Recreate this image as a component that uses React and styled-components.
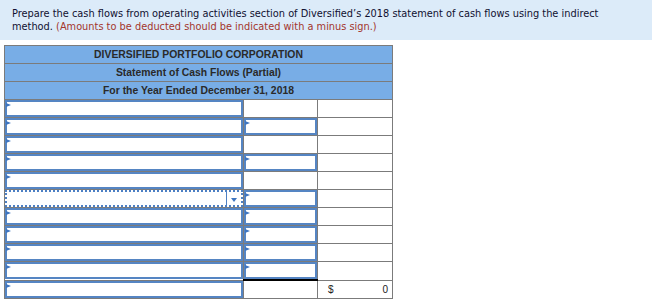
import React from "react";
import styled, { createGlobalStyle } from "styled-components";

const GlobalStyle = createGlobalStyle`
  body {
    margin: 0;
    background: #ffffff;
  }
`;

const Prompt = styled.div`
  background: #dcebf9;
  height: 40px;
  box-sizing: border-box;
  padding: 7px 12px 0 12px;
  font-family: "DejaVu Sans", Verdana, sans-serif;
  font-size: 9.8px;
  line-height: 13px;
  color: #101030;
`;

const Note = styled.span`
  color: #a3352c;
`;

const Sheet = styled.table`
  margin: 5px 0 0 4px;
  width: 388px;
  border-collapse: collapse;
  table-layout: fixed;
  font-family: "Liberation Sans", Arial, sans-serif;
`;

const HeadCell = styled.th`
  background: #78ade6;
  border: 1px solid #7b7b7b;
  height: 17px;
  padding: 0;
  font-size: 10.4px;
  font-weight: bold;
  color: #2a2a2a;
  text-align: center;
`;

const Cell = styled.td`
  border: 1px solid #7b7b7b;
  border-top: ${(p) => (p.$total ? "2px solid #000" : "1px solid #7b7b7b")};
  height: 17px;
  padding: 0;
  vertical-align: top;
  font-size: 10px;
`;

const Field = styled.div`
  position: relative;
  height: 17px;
  box-sizing: border-box;
  border: 2px solid #5585c3;
  background: #fff;
`;

const Flag = styled.span`
  position: absolute;
  left: -1px;
  top: 1px;
  width: 0;
  height: 0;
  border-top: 2.5px solid transparent;
  border-bottom: 2.5px solid transparent;
  border-left: 5px solid #3e75c0;
`;

const Picker = styled.div`
  height: 17px;
  box-sizing: border-box;
  border: 2px dotted #4d80c4;
  display: flex;
  justify-content: flex-end;
`;

const PickerArrow = styled.div`
  width: 14px;
  border-left: 1px solid #4d80c4;
  display: flex;
  align-items: center;
  justify-content: center;
  &::after {
    content: "";
    margin-top: 3px;
    border-left: 3.5px solid transparent;
    border-right: 3.5px solid transparent;
    border-top: 4px solid #3e75c0;
  }
`;

const Amount = styled.div`
  display: flex;
  justify-content: space-between;
  align-items: center;
  height: 17px;
  padding: 0 4px 0 10px;
  color: #222;
`;

const Input = () => (
  <Field>
    <Flag />
  </Field>
);

const rows = [
  { a: "input", b: false },
  { a: "input", b: true },
  { a: "input", b: false },
  { a: "input", b: true },
  { a: "input", b: false },
  { a: "select", b: true },
  { a: "input", b: true },
  { a: "input", b: true },
  { a: "input", b: true },
  { a: "input", b: true },
  { a: "input", b: false, total: true },
];

export default function App() {
  return (
    <>
      <GlobalStyle />
      <Prompt>
        Prepare the cash flows from operating activities section of Diversified’s 2018 statement of cash flows using the indirect
        method. <Note>(Amounts to be deducted should be indicated with a minus sign.)</Note>
      </Prompt>
      <Sheet>
        <colgroup>
          <col style={{ width: 239 }} />
          <col style={{ width: 74 }} />
          <col style={{ width: 75 }} />
        </colgroup>
        <thead>
          <tr>
            <HeadCell colSpan={3}>DIVERSIFIED PORTFOLIO CORPORATION</HeadCell>
          </tr>
          <tr>
            <HeadCell colSpan={3}>Statement of Cash Flows (Partial)</HeadCell>
          </tr>
          <tr>
            <HeadCell colSpan={3}>For the Year Ended December 31, 2018</HeadCell>
          </tr>
        </thead>
        <tbody>
          {rows.map((r, i) => (
            <tr key={i}>
              <Cell>
                {r.a === "select" ? (
                  <Picker>
                    <PickerArrow />
                  </Picker>
                ) : (
                  <Input />
                )}
              </Cell>
              <Cell $total={r.total}>{r.b && <Input />}</Cell>
              <Cell>
                {r.total && (
                  <Amount>
                    <span>$</span>
                    <span>0</span>
                  </Amount>
                )}
              </Cell>
            </tr>
          ))}
        </tbody>
      </Sheet>
    </>
  );
}
